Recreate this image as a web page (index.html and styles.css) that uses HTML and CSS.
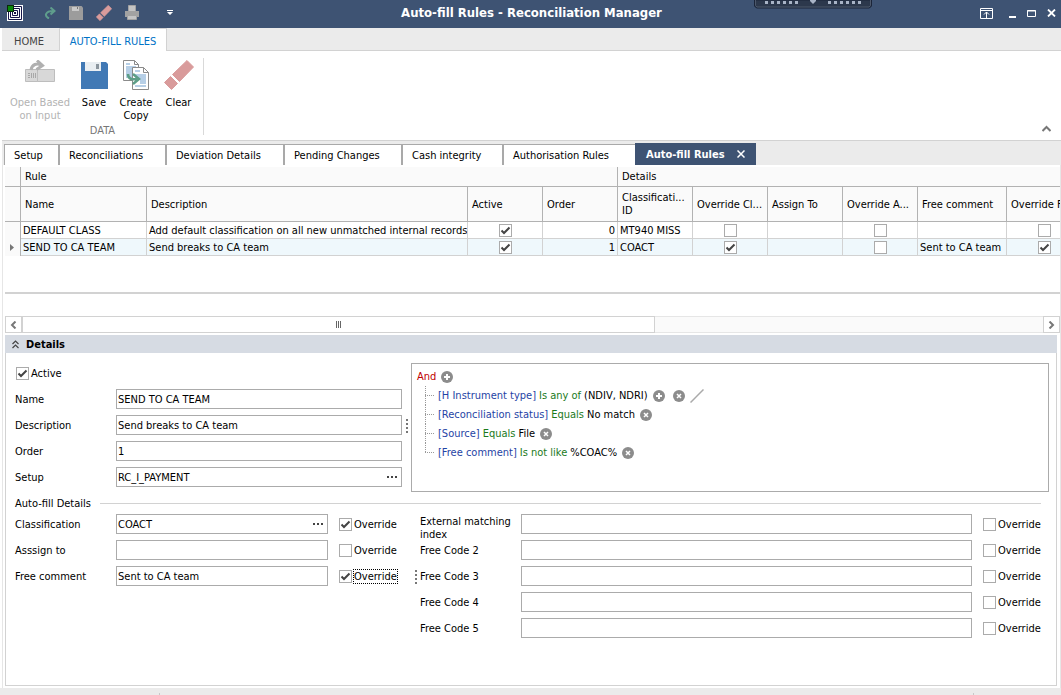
FILE: index.html
```html
<!DOCTYPE html>
<html lang="en">
<head>
  <meta charset="UTF-8" />
  <meta name="viewport" content="width=device-width, initial-scale=1.0"/>
  <title>Auto-fill Rules - Reconciliation Manager</title>
  <link rel="stylesheet" href="styles.css">
</head>
<body>
  <svg class="symbols" width="0" height="0">
    <symbol id="plus" viewBox="0 0 12 12"><circle cx="6" cy="6" r="6" fill="#8c8c8c"/><path d="M6 3v6M3 6h6" stroke="#fff" stroke-width="2"/></symbol>
    <symbol id="remove" viewBox="0 0 12 12"><circle cx="6" cy="6" r="6" fill="#8c8c8c"/><path d="M4 4l4 4M8 4l-4 4" stroke="#fff" stroke-width="1.5"/></symbol>
    <symbol id="dots" viewBox="0 0 11 3"><path d="M0 0h2v2H0zM4 0h2v2H4zM8 0h2v2H8z" fill="#444"/></symbol>
    <symbol id="eraser" viewBox="0 0 30 30"><path d="M23 0.500L29.500 7L15.500 21.500L8.500 14.500Z" fill="#d99b9b" stroke="#d99b9b" stroke-linejoin="round"/><path d="M6.500 16.500L13.500 23.500L7.500 29.500L0.500 22.500Z" fill="#d99b9b" stroke="#d99b9b" stroke-linejoin="round"/></symbol>
  </svg>

  <header class="titlebar">
    <div class="quick">
      <svg class="logo" width="16" height="16" viewBox="0 0 16 16"><path d="M0 0h16v16H0z" fill="#fff"/><path d="M1.500 1.500h13v13h-13zM3.500 3.500h9v9h-9zM5.500 5.500h5v5h-5z" fill="none" stroke="#15154a"/><path d="M7 7h2v2H7z" fill="#15154a"/><path d="M0 0h7v7H0z" fill="#0a2a0a"/><path d="M1 1h5v5H1z" fill="#0a860a"/></svg>
      <button class="redo" aria-label="Redo"><svg width="12" height="12" viewBox="0 0 12 12"><path d="M5 11.500C0 9 1 4 9.500 4M6.500 0.500L10.500 4L6.500 7.500" fill="none" stroke="#5f9e8c" stroke-width="2"/></svg></button>
      <button aria-label="Save"><svg width="14" height="14" viewBox="0 0 14 14"><path d="M0 0h12.500L14 1.500V14H0z" fill="#9c9c9c"/><path d="M3 1h7v4H3z" fill="#c9c9c9"/><path d="M8 1h1v2H8z" fill="#777"/></svg></button>
      <button aria-label="Clear"><svg width="16" height="16"><use href="#eraser"/></svg></button>
      <button aria-label="Print"><svg width="14" height="16" viewBox="0 0 14 16"><path d="M3.500 0.500h7v6h-7z" fill="#c4c4c4" stroke="#a2a2a2"/><path d="M0 6h14v6H0z" fill="#a2a2a2"/><path d="M2.500 10.500h9v4h-9z" fill="#c4c4c4" stroke="#a2a2a2"/></svg></button>
      <button class="more" aria-label="Customize"><svg width="6" height="6" viewBox="0 0 6 6"><path d="M0 0h6v1H0zM0 2h6L3 5z" fill="#fff"/></svg></button>
    </div>
    <h1>Auto-fill Rules - Reconciliation Manager</h1>
    <div class="window-buttons">
      <button aria-label="Ribbon options"><svg width="13" height="11" viewBox="0 0 13 11"><path d="M0.500 0.500h12v10h-12zM0 2.500h13M6.500 10V4M4 6.500L6.500 4L9 6.500" fill="none" stroke="#fff"/></svg></button>
      <button aria-label="Minimize"><svg width="7" height="9" viewBox="0 0 7 9"><path d="M0 7h7v2H0z" fill="#fff"/></svg></button>
      <button aria-label="Maximize"><svg width="9" height="7" viewBox="0 0 9 7"><path d="M0.500 0.500h8v6h-8zM0 1h9" fill="none" stroke="#fff"/></svg></button>
      <button aria-label="Close"><svg width="9" height="8" viewBox="0 0 9 8"><path d="M1 0.500l7 7M8 0.500l-7 7" stroke="#fff" stroke-width="1.800"/></svg></button>
    </div>
    <svg class="remote-handle" width="118" height="9" viewBox="0 0 118 9"><path d="M0.500 0v6l2 2h113l2-2V0z" fill="#2c384c" stroke="#1b2539"/><path d="M1.500 0v5.500l1.500 1.500h112l1.500-1.500V0" fill="none" stroke="#4d586b"/><path d="M11 2.500h34M74 2.500h34" stroke="#a9b4c6" stroke-width="3" stroke-dasharray="3 3"/><path d="M56 0h6v1l-3 3l-3-3z" fill="#a9b4c6"/></svg>
  </header>

  <nav class="ribbon-tabs">
    <button>HOME</button>
    <button class="active">AUTO-FILL RULES</button>
  </nav>

  <section class="ribbon">
    <div class="ribbon-group">
      <div class="ribbon-buttons">
        <button class="open" disabled>
          <svg width="30" height="30" viewBox="0 0 30 30"><path d="M0.500 9.500h12v12h-12zM12.500 9.500h17v12h-17z" fill="#d8d8d8" stroke="#bdbdbd"/><path d="M3 13.500h2M3 15.500h2M3 17.500h2M6.500 13v5M8.500 13v5M10.500 13v5" stroke="#a8a8a8"/><path d="M6 10C7 4 12 3 16 5M12 0.500l5.500 5l-6 4" fill="none" stroke="#b0b0b0" stroke-width="3"/></svg>
          <span>Open Based<br>on Input</span>
        </button>
        <button class="save">
          <svg width="27" height="30" viewBox="0 0 27 30"><path d="M0 2h25l2 2v25H0z" fill="#4179b5"/><path d="M4 2h16v9H4z" fill="#e9eef2"/><path d="M15 4h3v5h-3z" fill="#8b959e"/></svg>
          <span>Save</span>
        </button>
        <button class="copy">
          <svg width="27" height="30" viewBox="0 0 27 30"><path d="M0.500 0.500h11l4 4v16h-15z" fill="#fff" stroke="#8b8b8b"/><path d="M11.500 0.500v4h4" fill="none" stroke="#8b8b8b"/><path d="M3 4h4M3 7h10M3 9h10M3 11h10M3 13h10M3 15h10M3 17h8" stroke="#6e9fce"/><path d="M9.500 7.500h11l5 5v17h-16z" fill="#fff" stroke="#8b8b8b"/><path d="M20.500 7.500v5h5" fill="none" stroke="#8b8b8b"/><path d="M12 11h5M12 15h11M12 17h11M16 19h7M17 21h6M17 23h6M12 26h11" stroke="#6e9fce"/><path d="M5 14C5 19 9 20 14 19M10 14l6 5l-6 5" fill="none" stroke="#5d9e88" stroke-width="2.500"/></svg>
          <span>Create<br>Copy</span>
        </button>
        <button class="clear">
          <svg width="30" height="30"><use href="#eraser"/></svg>
          <span>Clear</span>
        </button>
      </div>
      <div class="group-caption">DATA</div>
    </div>
    <button class="collapse" aria-label="Collapse ribbon"><svg width="9" height="7" viewBox="0 0 9 7"><path d="M0.500 6L4.500 2L8.500 6" fill="none" stroke="#777" stroke-width="2"/></svg></button>
  </section>

  <nav class="doc-tabs">
    <button>Setup</button>
    <button>Reconciliations</button>
    <button>Deviation Details</button>
    <button>Pending Changes</button>
    <button>Cash integrity</button>
    <button>Authorisation Rules</button>
    <button class="active">Auto-fill Rules <svg width="8" height="8" viewBox="0 0 8 8"><path d="M0.500 0.500l7 7M7.500 0.500l-7 7" stroke="#fff" stroke-width="1.500"/></svg></button>
  </nav>

  <main class="workspace">
    <div class="grid">
      <table>
        <colgroup>
          <col class="c-mark"><col class="c-name"><col class="c-desc"><col><col><col><col><col><col><col class="c-free"><col>
        </colgroup>
        <thead>
          <tr class="bands">
            <th></th>
            <th colspan="4">Rule</th>
            <th colspan="6">Details</th>
          </tr>
          <tr class="columns">
            <th></th>
            <th>Name</th>
            <th>Description</th>
            <th>Active</th>
            <th>Order</th>
            <th>Classificati...<br>ID</th>
            <th>Override Cl...</th>
            <th>Assign To</th>
            <th>Override A...</th>
            <th>Free comment</th>
            <th>Override F</th>
          </tr>
        </thead>
        <tbody>
          <tr>
            <td class="mark"></td>
            <td>DEFAULT CLASS</td>
            <td>Add default classification on all new unmatched internal records</td>
            <td class="check"><input type="checkbox" aria-label="Active" checked></td>
            <td class="num">0</td>
            <td>MT940 MISS</td>
            <td class="check"><input type="checkbox" aria-label="Override classification"></td>
            <td></td>
            <td class="check"><input type="checkbox" aria-label="Override assign to"></td>
            <td></td>
            <td class="check"><input type="checkbox" aria-label="Override free comment"></td>
          </tr>
          <tr class="selected">
            <td class="mark"><svg width="4" height="7" viewBox="0 0 4 7"><path d="M0 0l4 3.500L0 7z" fill="#777"/></svg></td>
            <td>SEND TO CA TEAM</td>
            <td>Send breaks to CA team</td>
            <td class="check"><input type="checkbox" aria-label="Active" checked></td>
            <td class="num">1</td>
            <td>COACT</td>
            <td class="check"><input type="checkbox" aria-label="Override classification" checked></td>
            <td></td>
            <td class="check"><input type="checkbox" aria-label="Override assign to"></td>
            <td>Sent to CA team</td>
            <td class="check"><input type="checkbox" aria-label="Override free comment" checked></td>
          </tr>
        </tbody>
      </table>
    </div>

    <div class="scrollbar">
      <button aria-label="Scroll left"><svg width="7" height="8" viewBox="0 0 7 8"><path d="M5.500 0.500L2 4l3.500 3.500" fill="none" stroke="#777" stroke-width="2"/></svg></button>
      <div class="track"><div class="thumb"></div></div>
      <button aria-label="Scroll right"><svg width="7" height="8" viewBox="0 0 7 8"><path d="M1.500 0.500L5 4L1.500 7.500" fill="none" stroke="#777" stroke-width="2"/></svg></button>
    </div>

    <section class="details">
      <h2><svg width="7" height="9" viewBox="0 0 7 9"><path d="M0.500 4L3.500 1L6.500 4M0.500 8L3.500 5L6.500 8" fill="none" stroke="#444" stroke-width="1.200"/></svg>Details</h2>
      <div class="details-body">
        <div class="upper">
          <div class="fields">
            <div class="row"><label class="check-label first"><input type="checkbox" checked>Active</label></div>
            <div class="row">
              <label for="name">Name</label>
              <div class="editor"><input id="name" type="text" value="SEND TO CA TEAM"></div>
            </div>
            <div class="row">
              <label for="description">Description</label>
              <div class="editor"><input id="description" type="text" value="Send breaks to CA team"></div>
            </div>
            <div class="row">
              <label for="order">Order</label>
              <div class="editor"><input id="order" type="text" value="1"></div>
            </div>
            <div class="row">
              <label for="setup">Setup</label>
              <div class="editor"><input id="setup" type="text" value="RC_I_PAYMENT"><button aria-label="Browse setup"><svg width="11" height="3"><use href="#dots"/></svg></button></div>
            </div>
          </div>
          <div class="splitter"></div>
          <div class="filter">
            <div class="condition root"><span class="group-op">And</span> <button aria-label="Add condition"><svg width="12" height="12"><use href="#plus"/></svg></button></div>
            <ul>
              <li class="condition">
                <span class="field">[H Instrument type]</span> <span class="op">Is any of</span> <span>(NDIV, NDRI)</span>
                <button aria-label="Add value"><svg width="12" height="12"><use href="#plus"/></svg></button>
                <button class="apart" aria-label="Remove"><svg width="12" height="12"><use href="#remove"/></svg></button>
                <button aria-label="Edit"><svg width="14" height="14" viewBox="0 0 14 14"><path d="M0.500 13.500L13.500 0.500" stroke="#aaa" stroke-width="1.500"/></svg></button>
              </li>
              <li class="condition">
                <span class="field">[Reconciliation status]</span> <span class="op">Equals</span> <span>No match</span>
                <button aria-label="Remove"><svg width="12" height="12"><use href="#remove"/></svg></button>
              </li>
              <li class="condition">
                <span class="field">[Source]</span> <span class="op">Equals</span> <span>File</span>
                <button aria-label="Remove"><svg width="12" height="12"><use href="#remove"/></svg></button>
              </li>
              <li class="condition">
                <span class="field">[Free comment]</span> <span class="op">Is not like</span> <span>%COAC%</span>
                <button aria-label="Remove"><svg width="12" height="12"><use href="#remove"/></svg></button>
              </li>
            </ul>
          </div>
        </div>

        <h3>Auto-fill Details</h3>

        <div class="lower">
          <div class="fields narrow">
            <div class="row">
              <label for="classification">Classification</label>
              <div class="editor"><input id="classification" type="text" value="COACT"><button aria-label="Browse classification"><svg width="11" height="3"><use href="#dots"/></svg></button></div>
              <label class="check-label"><input type="checkbox" checked><span>Override</span></label>
            </div>
            <div class="row">
              <label for="assign">Asssign to</label>
              <div class="editor"><input id="assign" type="text"></div>
              <label class="check-label"><input type="checkbox"><span>Override</span></label>
            </div>
            <div class="row">
              <label for="comment">Free comment</label>
              <div class="editor"><input id="comment" type="text" value="Sent to CA team"></div>
              <label class="check-label focused"><input type="checkbox" checked><span>Override</span></label>
            </div>
          </div>
          <div class="splitter"></div>
          <div class="fields wide">
            <div class="row">
              <label class="two-line" for="external">External matching index</label>
              <div class="editor"><input id="external" type="text"></div>
              <label class="check-label"><input type="checkbox"><span>Override</span></label>
            </div>
            <div class="row">
              <label for="code2">Free Code 2</label>
              <div class="editor"><input id="code2" type="text"></div>
              <label class="check-label"><input type="checkbox"><span>Override</span></label>
            </div>
            <div class="row">
              <label for="code3">Free Code 3</label>
              <div class="editor"><input id="code3" type="text"></div>
              <label class="check-label"><input type="checkbox"><span>Override</span></label>
            </div>
            <div class="row">
              <label for="code4">Free Code 4</label>
              <div class="editor"><input id="code4" type="text"></div>
              <label class="check-label"><input type="checkbox"><span>Override</span></label>
            </div>
            <div class="row">
              <label for="code5">Free Code 5</label>
              <div class="editor"><input id="code5" type="text"></div>
              <label class="check-label"><input type="checkbox"><span>Override</span></label>
            </div>
          </div>
        </div>
      </div>
    </section>
  </main>

  <footer class="statusbar"><span></span><span></span></footer>
</body>
</html>
```
FILE: styles.css
```css
* {
  box-sizing: border-box;
}

body {
  margin: 0;
  min-height: 100vh;
  display: flex;
  flex-direction: column;
  font: 11px/13px Tahoma, "DejaVu Sans Condensed", "DejaVu Sans", sans-serif;
  color: #000;
  background: #fff;
  overflow: hidden;
}

button,
input {
  font: inherit;
  color: inherit;
}

button {
  padding: 0;
  border: none;
  background: none;
}

svg {
  display: block;
  flex: none;
}

.symbols {
  position: absolute;
}

h1, h2, h3, ul {
  margin: 0;
  padding: 0;
}

/* title bar */
.titlebar {
  position: relative;
  display: grid;
  grid-template-columns: 1fr auto 1fr;
  align-items: center;
  height: 28px;
  padding: 0 5px 2px 7px;
  background: #3e5373;
  color: #fff;
}

.titlebar h1 {
  font-size: 13px;
  line-height: 16px;
}

.quick {
  display: flex;
  align-items: center;
  gap: 13px;
}

.quick .redo {
  margin-left: 8px;
}

.quick .more {
  margin-left: 15px;
}

.window-buttons {
  display: flex;
  justify-content: flex-end;
  align-items: center;
  gap: 11px;
}

.window-buttons button:first-child {
  margin-right: 5px;
}

.remote-handle {
  position: absolute;
  top: 0;
  right: 189px;
}

/* ribbon */
.ribbon-tabs {
  display: flex;
  height: 23px;
  margin-left: 2px;
  background: #ebebeb;
  box-shadow: inset 0 -1px #d2d2d2;
}

.ribbon-tabs button {
  padding: 3px 3px 0 0;
  color: #444;
}

.ribbon-tabs button:first-child {
  width: 57px;
}

.ribbon-tabs .active {
  width: 108px;
  padding: 3px 0 0;
  border: 1px solid #d2d2d2;
  border-width: 1px 1px 0;
  background: #fff;
  color: #0072c6;
  white-space: nowrap;
}

.ribbon {
  display: flex;
  justify-content: space-between;
  height: 90px;
  margin-left: 2px;
  padding: 7px 10px 5px 8px;
  border-bottom: 1px solid #d2d2d2;
}

.ribbon-group {
  display: flex;
  flex-direction: column;
  justify-content: space-between;
  border-right: 1px solid #d9d9d9;
  text-align: center;
}

.ribbon-buttons {
  display: flex;
  padding-top: 2px;
}

.ribbon-buttons button {
  display: flex;
  flex-direction: column;
  align-items: center;
  gap: 6px;
  width: 49px;
  white-space: nowrap;
}

.ribbon-buttons .open {
  width: 60px;
  color: #b3b3b3;
}

.ribbon-buttons .save {
  width: 48px;
}

.ribbon-buttons .copy {
  width: 36px;
}

.group-caption {
  padding-right: 8px;
  color: #777;
  line-height: 8px;
}

.collapse {
  align-self: flex-end;
  padding-bottom: 3px;
}

/* document tabs */
.doc-tabs {
  display: grid;
  grid-template-columns: 56px 107px 118px 118px 101px 131px 121px;
  align-items: end;
  height: 24px;
  margin-left: 2px;
  padding: 2px 0 0 2px;
  background: #ebebeb;
}

.doc-tabs button {
  height: 21px;
  padding: 0 0 0 9px;
  border-top: 1px solid #a9a9a9;
  border-right: 2px solid #a9a9a9;
  background: #fff;
  text-align: left;
  white-space: nowrap;
}

.doc-tabs button:first-child {
  border-left: 1px solid #a9a9a9;
}

.doc-tabs button:nth-child(6) {
  border-right: none;
}

.doc-tabs .active {
  display: flex;
  align-items: center;
  justify-content: space-between;
  height: 22px;
  padding: 0 11px;
  border: none;
  background: #3e5373;
  color: #fff;
  font-weight: bold;
}

/* workspace */
.workspace {
  flex: 1;
  display: flex;
  flex-direction: column;
  margin-left: 2px;
  padding: 2px 0 2px 2px;
  border: 1px solid #e6e6e6;
  border-width: 0 1px;
}

.grid {
  height: 127px;
  overflow: hidden;
  border-bottom: 2px solid #d2d2d2;
}

.grid table {
  width: 1077px;
  table-layout: fixed;
  border-collapse: separate;
  border-spacing: 0;
}

col {
  width: 75px;
}

.c-mark {
  width: 16px;
}

.c-name {
  width: 126px;
}

.c-desc {
  width: 321px;
}

.c-free {
  width: 89px;
}

.grid th,
.grid td {
  overflow: hidden;
  white-space: nowrap;
}

.grid th {
  padding: 0 0 0 4px;
  border: 1px solid #b2b2b2;
  border-width: 0 1px 1px 0;
  background: #fafafa;
  font-weight: normal;
  text-align: left;
}

.bands th {
  height: 20px;
}

.columns th {
  height: 35px;
}

.grid td {
  height: 17px;
  padding: 0 2px;
  border: 1px solid #d2d2d2;
  border-width: 0 1px 1px 0;
}

.grid td.mark {
  padding: 0 5px;
  border-right-color: #b2b2b2;
  border-bottom: none;
  background: #fafafa;
}

.grid .check {
  text-align: center;
}

.grid .check input {
  display: block;
  margin: 0 auto;
}

.grid .num {
  text-align: right;
}

.selected td {
  background: #eff8fc;
}

input[type="checkbox"] {
  appearance: none;
  flex: none;
  width: 13px;
  height: 13px;
  margin: 0;
  border: 1px solid #ababab;
  background: #fff;
}

input[type="checkbox"]:checked {
  background: #fff url("data:image/svg+xml,%3Csvg xmlns='http://www.w3.org/2000/svg' viewBox='0 0 11 11'%3E%3Cpath d='M1.500 5.500L4 8L9.500 2.500' fill='none' stroke='%23444' stroke-width='2'/%3E%3C/svg%3E") center / 11px 11px no-repeat;
}

.scrollbar {
  display: flex;
  height: 17px;
  margin-top: 22px;
}

.scrollbar button {
  display: flex;
  align-items: center;
  justify-content: center;
  width: 17px;
  border: 1px solid #d2d2d2;
}

.track {
  flex: 1;
  background: #fafafa;
  border: 1px solid #e6e6e6;
  border-width: 1px 0;
}

.thumb {
  display: flex;
  justify-content: center;
  align-items: center;
  width: 62%;
  height: 17px;
  margin-top: -1px;
  border: 1px solid #d2d2d2;
  background: #fff;
}

.thumb::before {
  content: "";
  width: 5px;
  height: 7px;
  background: repeating-linear-gradient(90deg, #666 0 1px, transparent 1px 2px);
}

/* details panel */
.details {
  flex: 1;
  display: flex;
  flex-direction: column;
  margin: 2px 3px 0 0;
}

.details h2 {
  display: flex;
  align-items: center;
  gap: 7px;
  height: 18px;
  padding: 1px 7px 0;
  background: #d6dbe3;
  font-size: 11px;
  line-height: 13px;
}

.details-body {
  flex: 1;
  padding: 10px 7px 0 9px;
  border: 1px solid #d2d2d2;
  border-top: none;
}

.upper,
.lower {
  display: flex;
}

.fields {
  flex: none;
  display: flex;
  flex-direction: column;
  gap: 6px;
  width: 387px;
}

.fields.narrow {
  width: 382px;
}

.fields.wide {
  flex: 1;
  width: auto;
}

.row {
  display: flex;
  align-items: center;
  height: 20px;
}

.row > label:first-child {
  flex: none;
  width: 101px;
}

.row > label.two-line {
  align-self: flex-start;
  padding: 1px 8px 0 0;
}

.editor {
  flex: 1;
  display: flex;
  align-items: center;
  height: 20px;
  border: 1px solid #ababab;
  background: #fff;
}

.editor input {
  flex: 1;
  min-width: 0;
  height: 18px;
  padding: 0 1px;
  border: none;
  outline: none;
  background: none;
}

.editor button {
  padding: 0 3px;
}

.check-label {
  flex: none;
  display: flex;
  align-items: center;
  gap: 2px;
  width: 58px;
  margin-left: 11px;
  white-space: nowrap;
}

.check-label.first {
  margin-left: 1px;
}

.focused span {
  outline: 1px dotted #000;
}

.splitter {
  flex: none;
  display: flex;
  justify-content: center;
  width: 9px;
  padding-top: 56px;
}

.lower .splitter {
  justify-content: flex-end;
  width: 23px;
  padding-right: 3px;
}

.splitter::before {
  content: "";
  width: 2px;
  height: 14px;
  background: repeating-linear-gradient(#777 0 2px, transparent 2px 4px);
}

.filter {
  flex: 1;
  height: 129px;
  padding: 3px 5px;
  border: 1px solid #ababab;
}

.condition {
  display: flex;
  align-items: center;
  gap: 3px;
  height: 19px;
  white-space: nowrap;
}

.condition button {
  margin-left: 2px;
}

.condition button.apart {
  margin-left: 5px;
}

.filter ul {
  padding-left: 8px;
  list-style: none;
}

.filter li::before {
  content: "";
  align-self: stretch;
  width: 10px;
  background:
    repeating-linear-gradient(#999 0 1px, transparent 1px 2px) 0 0 / 1px 100% no-repeat,
    repeating-linear-gradient(90deg, #999 0 1px, transparent 1px 2px) 0 9px / 10px 1px no-repeat;
}

.filter li:last-child::before {
  background-size: 1px 10px, 10px 1px;
}

.group-op {
  color: #c00000;
}

.field {
  color: #1f44a5;
}

.op {
  color: #1b7a1b;
}

.details h3 {
  display: flex;
  align-items: center;
  gap: 9px;
  margin: 5px 8px 4px 0;
  font-size: 11px;
  font-weight: normal;
  line-height: 13px;
}

.details h3::after {
  content: "";
  flex: 1;
  height: 1px;
  background: #d2d2d2;
}

.lower {
  padding-right: 8px;
}

.statusbar {
  display: flex;
  justify-content: space-between;
  align-items: flex-end;
  height: 7px;
  padding: 0 87px 0 159px;
  background: #ebebeb;
}

.statusbar span {
  width: 1px;
  height: 2px;
  background: #c8c8c8;
}
```
